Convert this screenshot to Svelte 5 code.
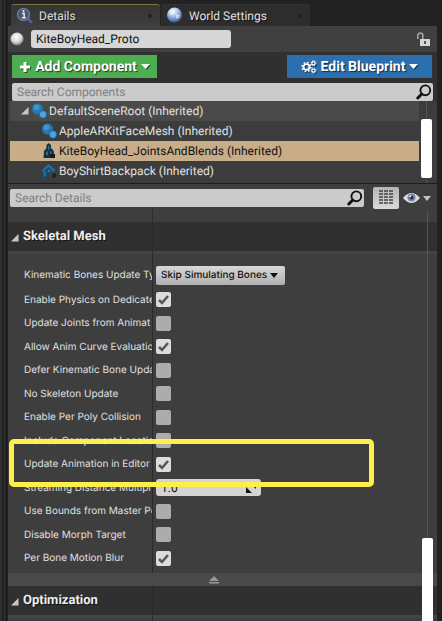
<script>
  let name = $state('KiteBoyHead_Proto');
  let componentQuery = $state('');
  let detailQuery = $state('');
  let scale = $state('1.0');
  let selected = $state(2);

  const tree = [
    { label: 'DefaultSceneRoot (Inherited)', icon: 'scene', root: true },
    { label: 'AppleARKitFaceMesh (Inherited)', icon: 'scene' },
    { label: 'KiteBoyHead_JointsAndBlends (Inherited)', icon: 'skeletal' },
    { label: 'BoyShirtBackpack (Inherited)', icon: 'mesh' }
  ];

  let props = $state([
    { id: 'physics', label: 'Enable Physics on Dedicate', value: true },
    { id: 'joints', label: 'Update Joints from Animat', value: false },
    { id: 'curves', label: 'Allow Anim Curve Evaluatio', value: true },
    { id: 'defer', label: 'Defer Kinematic Bone Upda', value: false },
    { id: 'noskel', label: 'No Skeleton Update', value: false },
    { id: 'poly', label: 'Enable Per Poly Collision', value: false },
    { id: 'location', label: 'Include Component Locatio', value: false },
    { id: 'editor', label: 'Update Animation in Editor', value: true, marked: true },
    { id: 'stream', label: 'Streaming Distance Multipl', number: true },
    { id: 'bounds', label: 'Use Bounds from Master Po', value: false },
    { id: 'morph', label: 'Disable Morph Target', value: false },
    { id: 'blur', label: 'Per Bone Motion Blur', value: true }
  ]);
</script>

{#snippet magnifier()}
  <svg class="mag" width="16" height="16" viewBox="0 0 16 16" aria-hidden="true">
    <circle cx="9.3" cy="6.3" r="4.9" fill="none" stroke="#111" stroke-width="1.9" />
    <path d="M5.8 10 1.8 14" stroke="#111" stroke-width="3" stroke-linecap="round" />
  </svg>
{/snippet}

{#snippet expander()}
  <svg width="8" height="8" viewBox="0 0 8 8" aria-hidden="true"><path d="M7.5 0v7.5H0z" fill="#c8c8c8" /></svg>
{/snippet}

<div class="window">
  <div class="panel">
    <nav class="tabs">
      <button class="tab active">
        <svg width="17" height="17" viewBox="0 0 17 17" aria-hidden="true">
          <path d="m11 11 4 4" stroke="#4a5fa0" stroke-width="3" stroke-linecap="round" />
          <circle cx="7.5" cy="7.5" r="6" fill="#4a5568" stroke="#66789f" stroke-width="1.6" />
          <path d="M6 6.6h2.2v4M5.8 10.8h4" stroke="#e8e8e8" stroke-width="1.5" fill="none" />
          <circle cx="7.5" cy="4.2" r="1.1" fill="#e8e8e8" />
        </svg>
        <span>Details</span><i></i>
      </button>
      <button class="tab">
        <svg width="17" height="17" viewBox="0 0 17 17" aria-hidden="true">
          <defs>
            <radialGradient id="globe" cx=".4" cy=".25" r=".75">
              <stop offset="0" stop-color="#fff" /><stop offset=".45" stop-color="#a9bfe8" /><stop offset="1" stop-color="#34569c" />
            </radialGradient>
          </defs>
          <circle cx="8.5" cy="8" r="7.5" fill="url(#globe)" />
          <path d="M3 6q3-3 6-2l-1 3-3 1zM10 7l4 1-1 3-3 1z" fill="#eef3fc" opacity=".6" />
        </svg>
        <span>World Settings</span><i></i>
      </button>
    </nav>

    <div class="namebar">
      <svg width="14" height="14" viewBox="0 0 14 14" aria-hidden="true">
        <defs>
          <radialGradient id="ball" cx=".45" cy=".35" r=".65">
            <stop offset="0" stop-color="#fff" /><stop offset=".6" stop-color="#d6d6d6" /><stop offset="1" stop-color="#777" />
          </radialGradient>
        </defs>
        <circle cx="7" cy="7" r="6.5" fill="url(#ball)" />
      </svg>
      <input class="name" aria-label="Name" bind:value={name} />
      <button class="lock" aria-label="Lock">
        <svg width="15" height="15" viewBox="0 0 15 15">
          <path d="M1.8 7V3.6a2.5 2.5 0 0 1 5 0V7" fill="none" stroke="#aaa" stroke-width="1.5" />
          <rect x="4" y="7" width="10" height="7" fill="#d6d6d6" /><path d="M9 9v3" stroke="#333" stroke-width="1.6" />
        </svg>
      </button>
    </div>

    <div class="actions">
      <button class="action green">
        <svg width="12" height="12" viewBox="0 0 12 12" aria-hidden="true"><path d="M6 1v10M1 6h10" stroke="#fff" stroke-width="3" /></svg>
        <span>Add Component</span>
        <svg width="9" height="5" viewBox="0 0 9 5" aria-hidden="true"><path d="M0 0h9L4.5 5z" fill="#fff" /></svg>
      </button>
      <button class="action blue">
        <svg width="16" height="14" viewBox="0 0 16 14" aria-hidden="true">
          <g fill="none" stroke="#fff">
            <circle cx="5.5" cy="7" r="2.9" stroke-width="1.8" />
            <circle cx="5.5" cy="7" r="4.4" stroke-width="1.6" stroke-dasharray="1.7 1.75" />
            <circle cx="12.5" cy="3.2" r="1.6" stroke-width="1.2" />
            <circle cx="12.5" cy="3.2" r="2.5" stroke-width="1" stroke-dasharray="1 .96" />
            <circle cx="12.5" cy="10.6" r="1.6" stroke-width="1.2" />
            <circle cx="12.5" cy="10.6" r="2.5" stroke-width="1" stroke-dasharray="1 .96" />
          </g>
        </svg>
        <span>Edit Blueprint</span>
        <svg width="9" height="5" viewBox="0 0 9 5" aria-hidden="true"><path d="M0 0h9L4.5 5z" fill="#fff" /></svg>
      </button>
    </div>

    <div class="search components">
      <input aria-label="Search Components" placeholder="Search Components" bind:value={componentQuery} />
      {@render magnifier()}
    </div>

    <div class="treebox">
      <div class="tree">
        {#each tree as node, i}
          <button class="node" class:root={node.root} class:selected={selected === i} onclick={() => (selected = i)}>
            {#if node.root}{@render expander()}{/if}
            <svg width="16" height="16" viewBox="0 0 16 16" aria-hidden="true">
              {#if node.icon === 'scene'}
                <circle cx="6.5" cy="6" r="5.5" fill="#2577ae" />
                <circle cx="5.5" cy="4.5" r="3" fill="#3d94c9" />
                <circle cx="12" cy="11.5" r="3.7" fill="#4aa3dc" stroke="#1d567e" stroke-width=".6" />
              {:else if node.icon === 'skeletal'}
                <path d="M7.500 0 10 2v3l2.500 2.500L13.500 15H2.500L3 8l2.500-3V2z" fill="#16303f" />
                <path d="M7 3h1.500v3L7 8zM5 9l2-1v4H5zM9 8l1.500 1v3H9z" fill="#2d6d92" />
                <path d="M9 11h5v4H9z" fill="#101c24" />
              {:else}
                <path d="M1.500 8 7.500 2.500l6 5.500" fill="none" stroke="#2674a3" stroke-width="2.200" />
                <path d="M3 8 7.500 4 12 8v6H9.500V9.500H6V14H3z" fill="#17527a" />
                <path d="M3.500 8.500v5M7 8h2" stroke="#2b80b3" stroke-width="1.400" />
                <path d="M11 10.500h4v4h-4z" fill="#142430" />
              {/if}
            </svg>
            <span>{node.label}</span>
          </button>
        {/each}
      </div>
      <div class="track"><div class="thumb"></div></div>
    </div>

    <div class="filter">
      <div class="search">
        <input aria-label="Search Details" placeholder="Search Details" bind:value={detailQuery} />
        {@render magnifier()}
      </div>
      <button class="matrix" aria-label="Property matrix">
        <svg width="14" height="15" viewBox="0 0 14 15">
          <path d="M0 1h14M0 4h14M0 7h14M0 10h14M0 13h14" stroke="#444" stroke-width="1.700" stroke-dasharray="4 1" />
        </svg>
      </button>
      <button class="view" aria-label="View options">
        <svg width="28" height="12" viewBox="0 0 28 12">
          <path d="M0 6Q8.500-4 17 6 8.500 16 0 6z" fill="#dcdcdc" />
          <circle cx="8.500" cy="5.500" r="4" fill="#7c88a6" /><circle cx="8.500" cy="5.500" r="1.900" fill="#272e40" />
          <circle cx="7.300" cy="4.200" r="1" fill="#fff" />
          <path d="M20 4h8l-4 5z" fill="#c4c4c4" />
        </svg>
      </button>
    </div>

    <div class="details">
      <div class="spacer"></div>
      <h2>{@render expander()}<span>Skeletal Mesh</span></h2>
      <div class="row first">
        <label for="kinematic">Kinematic Bones Update Ty</label>
        <div class="value">
          <div class="select">
            <select id="kinematic"><option>Skip Simulating Bones</option><option>Skip All Bones</option></select>
            <svg width="8" height="5" viewBox="0 0 8 5" aria-hidden="true"><path d="M0 0h8L4 5z" fill="#111" /></svg>
          </div>
        </div>
      </div>
      <div class="rows">
        {#each props as p}
          <div class="row">
            <label for={p.id}>{p.label}</label>
            <div class="value">
              {#if p.number}
                <div class="number">
                  <input id={p.id} bind:value={scale} />
                  <svg width="10" height="10" viewBox="0 0 10 10" aria-hidden="true">
                    <path d="M0 4v6h6zM4 0h6v6z" fill="#111" />
                  </svg>
                </div>
              {:else}
                <input id={p.id} type="checkbox" bind:checked={p.value} />
              {/if}
            </div>
            {#if p.marked}<div class="mark"></div>{/if}
          </div>
        {/each}
      </div>
      <button class="collapse" aria-label="Hide advanced">
        <svg width="12" height="8" viewBox="0 0 12 8"><path d="M6 0l5 5H1zM1 6h10v1.500H1z" fill="#999" /></svg>
      </button>
      <h2>{@render expander()}<span>Optimization</span></h2>
      <div class="scroll"></div>
    </div>
  </div>
</div>

<style>
  :global(body) { background: #222; }
  .window {
    box-sizing: border-box;
    min-height: 100vh;
    padding: 4px 5px 0 8px;
    background: linear-gradient(90deg, #2e2e2e 0 2px, #202020 2px 4px, #333 4px 5px, #1e1e1e 5px 8px, transparent 8px), #222;
    font: 12px/16px Roboto, "Liberation Sans", sans-serif;
    text-rendering: geometricPrecision;
    color: #e0e0e0;
  }
  button, input, select { font: inherit; color: inherit; text-rendering: inherit; margin: 0; padding: 0; border: 0; background: none; }
  svg { display: block; flex: none; }
  .panel { display: flex; flex-direction: column; min-height: calc(100vh - 4px); }

  .tabs { display: flex; height: 22px; padding-left: 3px; gap: 1px; }
  .tab {
    box-sizing: border-box;
    display: flex;
    align-items: center;
    width: 149px;
    padding: 0 8px 0 5px;
    gap: 6px;
    background: #2d2d2d;
    border-top: 1px solid #333;
    border-radius: 3px 3px 0 0;
    text-shadow: 1px 1px #111;
  }
  .tab.active { background: linear-gradient(#353535, #3e3e3e); border-top-color: #7d7340; }
  .tab i { width: 4px; height: 4px; margin-left: auto; border-radius: 2px; background: #222; }

  .namebar { display: flex; align-items: center; height: 26px; padding: 0 6px 0 2px; gap: 7px; background: #404040; }
  .name {
    box-sizing: border-box;
    width: 200px;
    height: 18px;
    padding: 0 5px;
    border-radius: 3px;
    background: #d6d6d6;
    color: #111;
  }
  .lock { margin-left: auto; }

  .actions { display: flex; justify-content: space-between; padding: 3px 5px 5px 4px; background: #303030; }
  .action {
    display: flex;
    align-items: center;
    justify-content: center;
    width: 145px;
    height: 23px;
    gap: 4px;
    color: #fff;
    font-size: 14px;
    font-weight: 700;
    text-shadow: 1px 1px 1px #000a;
    white-space: nowrap;
  }
  .action svg { filter: drop-shadow(1px 1px 0 #0008); }
  .green { background: #4cae4f; }
  .blue { background: #2b6fae; }

  .search {
    display: flex;
    align-items: center;
    flex: 1;
    height: 18px;
    padding: 0 1px 0 5px;
    border-radius: 2px;
    background: #cbcbcb;
  }
  .search input { flex: 1; min-width: 0; color: #111; }
  .search input::placeholder { color: #808080; opacity: 1; }
  .components { flex: none; margin: 0 4px; box-shadow: 0 0 0 4px #303030; }
  .search:focus-within { outline: 1px solid #d79a3c; }

  .treebox { position: relative; display: flex; height: 82px; padding: 0 5px 0 2px; background: #3c3c3c; border-bottom: 1px solid #1c1c1c; }
  .tree { flex: 1; }
  .node {
    display: flex;
    align-items: center;
    width: 100%;
    height: 20px;
    padding-left: 31px;
    gap: 2px;
    white-space: nowrap;
    background: #3c3c3c;
  }
  .node.root { padding-left: 11px; background: #4a4a4a; }
  .node.selected { background: #c9ad88; color: #111; }
  .track {
    width: 11px;
    margin-left: 2px;
    padding-top: 18px;
    background: linear-gradient(90deg, transparent 5px, #555 5px 6px, transparent 6px);
  }
  .thumb { height: 59px; border-radius: 2px; background: #fff; }

  .filter { display: flex; align-items: center; height: 23px; padding: 2px 6px 0 2px; background: #3e3e3e; }
  .matrix {
    display: grid;
    place-items: center;
    width: 26px;
    height: 22px;
    margin: 0 4px 0 9px;
    border-radius: 2px;
    background: linear-gradient(#b5b5b5, #dadada);
  }

  .details { position: relative; flex: 1; background: #3e3e3e; }
  .details::before {
    content: "";
    position: absolute;
    z-index: 1;
    top: 0;
    left: 144px;
    width: 1px;
    height: 100%;
    background: #2a2a2a;
  }
  .details::after {
    content: "";
    position: absolute;
    top: 3px;
    right: 9px;
    bottom: 80px;
    width: 1px;
    background: #555;
  }
  .spacer { height: 13px; }
  h2 {
    box-sizing: border-box;
    display: flex;
    align-items: center;
    height: 32px;
    margin: 0;
    padding-left: 3px;
    gap: 4px;
    background: #303030;
    border-bottom: 3px solid #444;
    color: #eee;
    font-size: 13px;
    font-weight: 700;
    text-shadow: 1px 1px #111;
  }
  h2 :global(svg) { margin-top: 3px; }
  .row { position: relative; display: flex; align-items: center; }
  .row label {
    flex: none;
    width: 128px;
    padding-left: 16px;
    overflow: hidden;
    white-space: nowrap;
    font-family: Inter, Roboto, sans-serif;
    font-size: 10px;
  }
  .value { display: flex; margin-left: 4px; }
  .first { height: 26px; padding-top: 8px; }
  .rows { display: grid; grid-auto-rows: 1fr; height: 282px; }
  .select { display: flex; align-items: center; }
  select {
    appearance: none;
    width: 129px;
    height: 19px;
    padding: 0 14px 0 5px;
    border-radius: 2px;
    background: linear-gradient(#d8d8d8, #b0b0b0);
    color: #111;
    font-family: Inter, Roboto, sans-serif;
    font-size: 10px;
    font-weight: 500;
  }
  .select svg { margin-left: -15px; pointer-events: none; }
  input[type="checkbox"] {
    appearance: none;
    width: 15px;
    height: 15px;
    border-radius: 2px;
    background: #acacac;
  }
  input[type="checkbox"]:checked {
    background: #dcdcdc url("data:image/svg+xml,%3Csvg xmlns='http://www.w3.org/2000/svg' viewBox='0 0 15 15'%3E%3Cpath d='M3 8l3 3 6-7' fill='none' stroke='%23555' stroke-width='2.500'/%3E%3C/svg%3E");
  }
  .number { display: flex; align-items: center; width: 105px; height: 17px; border-radius: 3px; background: #d4d4d4; color: #111; }
  .number input { flex: 1; min-width: 0; padding-left: 5px; }
  .number svg { margin-right: 5px; }
  .mark {
    position: absolute;
    z-index: 2;
    top: -14px;
    left: 1px;
    box-sizing: border-box;
    width: 365px;
    height: 48px;
    border: 5px solid #fdf04a;
    border-radius: 5px;
    pointer-events: none;
  }
  .collapse {
    position: relative;
    z-index: 1;
    display: grid;
    place-items: center;
    width: 100%;
    height: 13px;
    margin-top: 3px;
    padding-right: 18px;
    background: #494949;
  }
  .scroll {
    position: absolute;
    z-index: 2;
    right: 4px;
    bottom: 0;
    width: 11px;
    height: 83px;
    border-radius: 2px 2px 0 0;
    background: #fff;
  }
</style>
